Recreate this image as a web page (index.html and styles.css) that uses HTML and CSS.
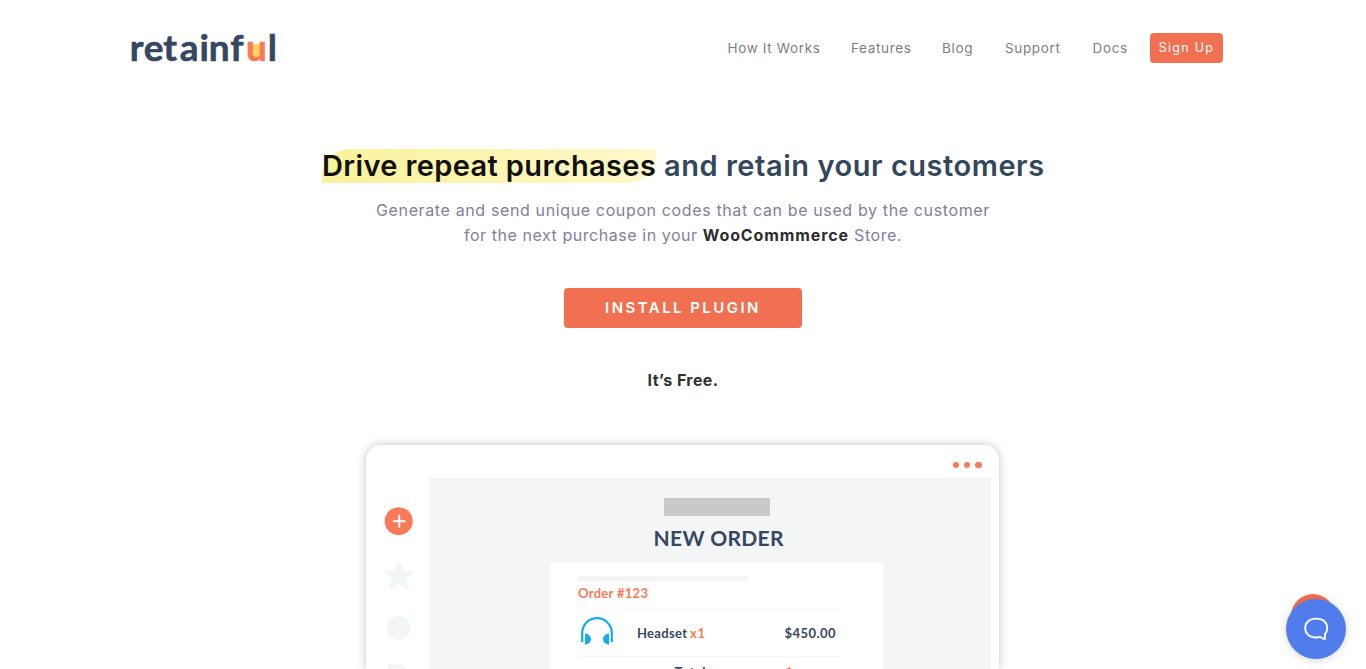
FILE: index.html
```
<!DOCTYPE html>
<html lang="en">
<head>
<meta charset="utf-8">
<title>Retainful</title>
<link rel="stylesheet" href="styles.css">
</head>
<body>
<header class="header">
  <a class="logo">
    <svg width="150" height="54" viewBox="0 -5 150 54" role="img" aria-label="retainful">
      <rect class="logo-fill" x="121" y="23" width="9" height="14"/>
      <text class="logo-text" y="39.500" x="-1.3 12.8 32.3 48.8 68.6 77.7 99.300">retainf</text>
      <text class="logo-text logo-u" y="39.500" x="115">u</text>
      <text class="logo-text" y="39.500" x="136.800">l</text>
    </svg>
  </a>
  <nav class="nav">
    <a class="nav-link n1">How It Works</a>
    <a class="nav-link n2">Features</a>
    <a class="nav-link n3">Blog</a>
    <a class="nav-link n4">Support</a>
    <a class="nav-link n5">Docs</a>
    <a class="signup">Sign Up</a>
  </nav>
</header>
<main class="hero">
  <h1 class="title"><span class="mark">Drive repeat purchases</span> <span class="title-rest">and retain your customers</span></h1>
  <p class="lead"><span class="lead-one">Generate and send unique coupon codes that can be used by the customer</span><br><span class="lead-two">for the next purchase in your <b>WooCommmerce</b> Store.</span></p>
  <a class="install">INSTALL PLUGIN</a>
  <p class="free">It’s Free.</p>
  <section class="window">
    <div class="window-bar"><i class="dot"></i><i class="dot"></i><i class="dot"></i></div>
    <div class="window-body">
      <aside class="side">
        <svg width="64" height="192" viewBox="0 0 64 192">
          <circle class="accent" cx="32.700" cy="43.200" r="14"/>
          <path class="plus" d="M27.700 43.200h11M33.200 37.700v11"/>
          <path class="muted" d="M32.6 82.500l4.500 9.700 10.700 1.200-7.900 7.300 2.100 10.500-9.400-5.200-9.300 5.200 2.100-10.500-7.900-7.300 10.700-1.200z"/>
          <circle class="muted" cx="32.600" cy="149.800" r="11.600"/>
          <path class="muted" d="M24 186.500h12l6 6H22v-4q0-2 2-2z"/>
        </svg>
      </aside>
      <div class="screen">
        <div class="brand"></div>
        <svg class="heading" width="140" height="30"><text class="order-title" x="4.500" y="22" textLength="130">NEW ORDER</text></svg>
        <div class="order">
          <div class="strip"></div>
          <svg width="263" height="90" viewBox="0 0 263 90">
            <text class="small orange" x="0" y="17" textLength="70">Order #123</text>
            <path class="rule" d="M0 28.500h262M0 75.500h262"/>
            <path class="phones" d="M4.200 61V52a14.800 14.800 0 0 1 29.600 0v9"/>
            <path class="cup" d="M7 52.600c8 .5 8 10.700 0 11.200zM31 52.600c-8 .5-8 10.700 0 11.200z"/>
            <text class="small" x="59" y="57" textLength="50">Headset</text>
            <text class="small orange" x="112" y="57" textLength="15">x1</text>
            <text class="small" x="206.500" y="57" textLength="51">$450.00</text>
          </svg>
          <svg class="total" width="263" height="20"><text class="small" x="96.500" y="6.300" textLength="31">Total</text><text class="small orange" x="207" y="7">$</text></svg>
        </div>
      </div>
    </div>
  </section>
</main>
<div class="chat">
  <div class="chat-back"></div>
  <div class="chat-button">
    <svg width="28" height="28" viewBox="0 0 28 28"><path class="bubble" d="M18.300 21.900c-1.300.4-2.700.6-4.300.6C7.300 22.500 3.200 18.600 3.200 13S7.300 3.600 14.200 3.600 25.200 7.500 25.200 13c0 2.700-.8 4.700-2.300 6.400v4.700c-1.800-.1-3.300-.8-4.600-2.200z"/></svg>
  </div>
</div>
</body>
</html>
```
FILE: styles.css
```
* { box-sizing: border-box; }
body { margin: 0; height: 669px; overflow: hidden; background: #fff; font-family: Inter, "Open Sans", sans-serif; position: relative; }
.header { display: flex; justify-content: space-between; align-items: center; height: 96px; padding: 0 143px 0 131px; }
.logo { display: flex; height: 64px; }
.logo svg, .total { overflow: visible; }
.logo-text { font: 700 37px Lato, sans-serif; fill: #364861; stroke: #364861; stroke-width: .6px; stroke-linejoin: round; }
.logo-u { fill: #f97a58; stroke: #f97a58; }
.logo-fill { fill: #ffd55f; }
.nav { display: flex; align-items: center; font-size: 13.500px; color: #7c7f7e; }
.nav-link { white-space: nowrap; letter-spacing: .65px; }
.n1 { width: 123.500px; }
.n2 { width: 91px; }
.n3 { width: 63px; }
.n4 { width: 87.500px; }
.n5 { width: 57.500px; }
.signup { width: 73px; height: 30px; line-height: 30px; border-radius: 4px; background: #f27052; color: #fff; text-align: center; font-size: 12.500px; letter-spacing: 1.300px; white-space: nowrap; }
.hero { display: flex; flex-direction: column; align-items: center; padding-top: 53px; }
.title { margin: 0; height: 34px; line-height: 34px; font-size: 29px; font-weight: 600; color: #34475a; white-space: nowrap; display: flex; gap: 8px; }
.mark { width: 334px; color: #111; border-radius: 28px 0 28px 0; background: linear-gradient(100deg, #faf29a, #fdf8cc); letter-spacing: .37px; }
.title-rest { width: 380px; letter-spacing: .54px; }
.lead { margin: 15px 0 0; line-height: 25px; font-size: 16px; color: #81819a; text-align: center; white-space: nowrap; }
.lead-one { letter-spacing: .63px; }
.lead-two { letter-spacing: .55px; }
.lead b { color: #2c2c2c; letter-spacing: .9px; }
.install { width: 238px; height: 40px; line-height: 40px; margin-top: 40px; border-radius: 4px; background: #f27052; color: #fff; font-size: 15px; font-weight: 600; letter-spacing: 2.450px; text-align: center; }
.free { margin: 40px 0 0; height: 25px; line-height: 25px; font-size: 16px; font-weight: 700; letter-spacing: .4px; color: #303234; }
.window { width: 633.500px; height: 224px; flex: none; margin: 52px .9px 0 0; border-radius: 15px 15px 0 0; background: #fff; box-shadow: 0 0 10px rgba(0,0,0,.24); }
.window-bar { height: 32.500px; padding: 17px 17.800px 0 0; display: flex; justify-content: flex-end; gap: 5px; }
.dot { width: 6.200px; height: 6.200px; border-radius: 50%; background: #f97a58; }
.window-body { display: flex; height: 191.500px; overflow: hidden; }
.side { width: 63.500px; }
.accent { fill: #f97a58; }
.plus { stroke: #fff; stroke-width: 2; stroke-linecap: round; }
.muted { fill: #f4f6f5; }
.screen { width: 562px; background: #f4f6f5; display: flex; flex-direction: column; align-items: center; padding: 20px 0 0 13px; }
.brand { width: 106px; height: 18px; flex: none; background: #c9c9c9; }
.heading { margin-top: 8.500px; flex: none; margin-left: 4px; }
.order-title { font: 700 21px Lato, sans-serif; fill: #364861; }
.order { width: 333px; height: 107px; flex: none; margin-top: 9px; background: #fff; padding: 13px 0 0 28px; }
.strip { width: 170px; height: 5px; background: #f4f6f5; }
.order svg { display: block; }
.small { font: 700 13px Lato, sans-serif; fill: #364861; }
.small.orange { fill: #f97a58; }
.rule { stroke: #f6f7f7; stroke-width: 1; }
.phones { fill: none; stroke: #16abee; stroke-width: 2.200; }
.cup { fill: #16abee; }
.chat { position: absolute; left: 1286px; top: 594px; width: 60px; height: 65px; }
.chat-back { position: absolute; left: 5px; top: 0; width: 44px; height: 44px; border-radius: 50%; background: #f27052; }
.chat-button { position: absolute; left: 0; top: 5px; width: 60px; height: 60px; border-radius: 50%; background: #517dec; box-shadow: 0 1px 10px rgba(0,0,0,.16); display: flex; align-items: center; justify-content: center; }
.bubble { fill: none; stroke: #fff; stroke-width: 1.800; stroke-linejoin: round; }
```
